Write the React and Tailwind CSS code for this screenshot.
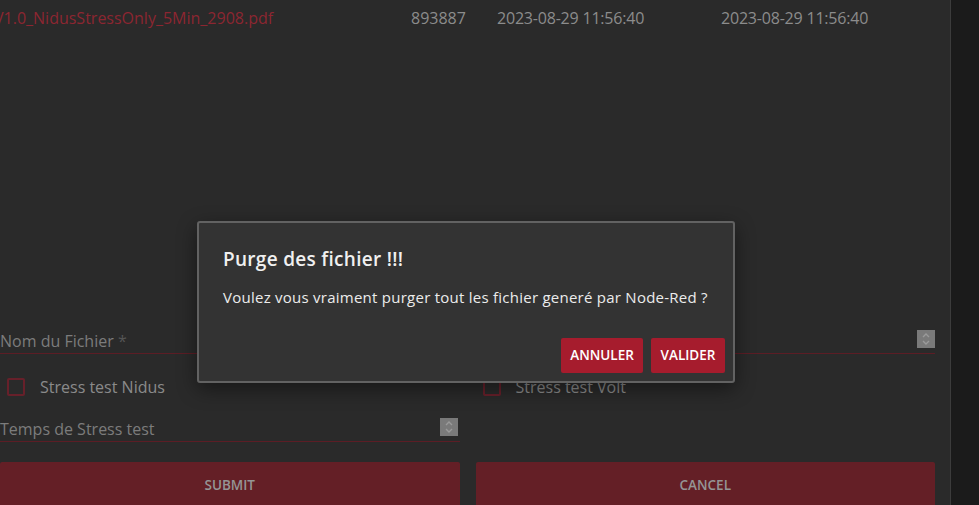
import React from 'react'

function Spinner() {
  return (
    <div className="w-[18px] h-[18px] bg-[#7a7a7a] flex items-center justify-center shrink-0">
      <svg width="10" height="14" viewBox="0 0 10 14" fill="none" stroke="#9a9a9a" strokeWidth="1.4">
        <path d="M2 5 L5 2 L8 5" />
        <path d="M2 9 L5 12 L8 9" />
      </svg>
    </div>
  )
}

function Check({ label }) {
  return (
    <div className="flex items-center gap-[15px] pl-[7px] h-[24px]">
      <div className="w-[18px] h-[18px] border-2 border-[#67202a] rounded-[2px]" />
      <span className="text-[16px] text-[#8a8a8a]">{label}</span>
    </div>
  )
}

export default function App() {
  return (
    <div
      className="relative w-[979px] h-[505px] overflow-hidden bg-[#2a2a2a] flex"
      style={{ fontFamily: '"Open Sans", "Noto Sans", sans-serif' }}
    >
      <div className="w-[950px] shrink-0 flex flex-col pr-[15px]">
        {/* table row */}
        <div className="h-[325px] shrink-0">
          <div className="flex items-center h-[35px] text-[16px] text-[#8c8c8c] whitespace-nowrap">
            <span className="w-[417px] shrink-0 -ml-[6px] text-[#8c2631]">V1.0_NidusStressOnly_5Min_2908.pdf</span>
            <span className="w-[86px] shrink-0">893887</span>
            <span className="w-[224px] shrink-0 tracking-[-0.2px]">2023-08-29 11:56:40</span>
            <span className="tracking-[-0.2px]">2023-08-29 11:56:40</span>
          </div>
        </div>

        {/* form */}
        <div className="flex items-end h-[29px] shrink-0 border-b border-[#5c1d25]">
          <span className="flex-1 text-[16px] text-[#7c7c7c]">
            Nom du Fichier <span className="text-[#555]">*</span>
          </span>
          <div className="pb-[5px]">
            <Spinner />
          </div>
        </div>
        <div className="grid grid-cols-2 gap-4 mt-[21px] shrink-0">
          <Check label="Stress test Nidus" />
          <Check label="Stress test Volt" />
        </div>
        <div className="grid grid-cols-2 gap-4 mt-[12px] shrink-0">
          <div className="flex items-end h-[31px] border-b border-[#5c1d25]">
            <span className="flex-1 text-[16px] text-[#7c7c7c]">Temps de Stress test</span>
            <div className="pb-[5px] pr-[2px]">
              <Spinner />
            </div>
          </div>
          <div />
        </div>
        <div className="grid grid-cols-2 gap-4 mt-[20px] shrink-0">
          <div className="h-[50px] bg-[#641f26] rounded-t-[2px] flex justify-center pt-[13px] text-[13.5px] font-semibold text-[#959595]">
            SUBMIT
          </div>
          <div className="h-[50px] bg-[#641f26] rounded-t-[2px] flex justify-center pt-[13px] text-[13.5px] font-semibold text-[#959595]">
            CANCEL
          </div>
        </div>
      </div>
      <div className="flex-1 bg-[#1b1b1b] border-l border-[#3c3c3c]" />

      {/* dialog */}
      <div className="absolute left-[197px] top-[221px] w-[538px] h-[162px] bg-[#333333] border-2 border-[#626262] rounded-[3px] shadow-[0_6px_20px_rgba(0,0,0,0.45)] flex flex-col pl-[24px] pt-[23px] pb-[8px] pr-[8px]">
        <div className="text-[19px] tracking-[0.3px] font-semibold text-[#f0f0f0] leading-[26px]">Purge des fichier !!!</div>
        <div className="text-[15px] tracking-[0.25px] text-[#ececec] mt-[15px] leading-[20px] whitespace-nowrap">
          Voulez vous vraiment purger tout les fichier generé par Node-Red ?
        </div>
        <div className="mt-auto flex justify-end gap-[8px]">
          <button className="h-[35px] w-[82px] bg-[#a61c2d] rounded-[2px] text-white text-[13.5px] font-semibold">
            ANNULER
          </button>
          <button className="h-[35px] w-[74px] bg-[#a61c2d] rounded-[2px] text-white text-[13.5px] font-semibold">
            VALIDER
          </button>
        </div>
      </div>
    </div>
  )
}
